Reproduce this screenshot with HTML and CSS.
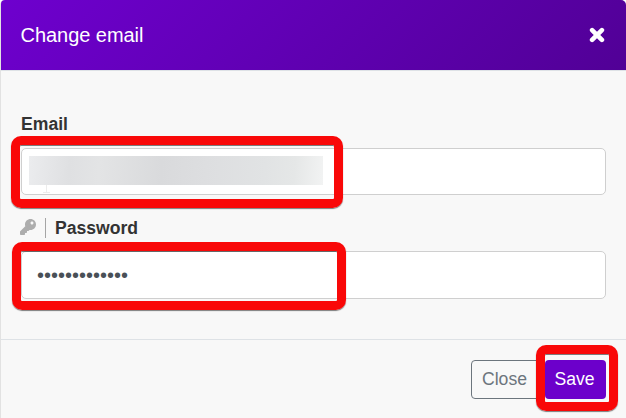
FILE: index.html
```html
<!DOCTYPE html>
<html lang="en">
<head>
<meta charset="utf-8">
<title>Change email</title>
<link rel="stylesheet" href="styles.css">
</head>
<body>
<div class="modal">
  <header class="modal-header">
    <h1 class="title">Change email</h1>
    <svg class="close-icon" viewBox="0 0 16 16"><path d="M3.1 3.1 12.9 12.9M12.9 3.1 3.1 12.9"/></svg>
  </header>
  <main class="modal-body">
    <div class="label">Email</div>
    <div class="field field-email">
      <div class="redacted"></div>
      <svg class="cursor" viewBox="0 0 7 8"><path d="M3.5 0V7.5M0 7.5H7"/></svg>
      <div class="highlight highlight-email"></div>
    </div>
    <div class="label label-password">
      <svg class="key" viewBox="0 0 512 512"><path d="M512 176c0 97-79 176-176 176-11 0-22-1-33-3l-24 27c-5 5-11 8-18 8h-37v40c0 13-11 24-24 24h-40v40c0 13-11 24-24 24H24c-13 0-24-11-24-24v-78c0-6 3-12 7-17l162-162c-6-17-9-36-9-55C160 79 239 0 336 0c97 0 176 79 176 176zM336 128c0 27 21 48 48 48s48-21 48-48-21-48-48-48-48 21-48 48z"/></svg>
      <span class="divider"></span>
      <span>Password</span>
    </div>
    <div class="field field-password">
      <span class="dots">•••••••••••••</span>
      <div class="highlight highlight-password"></div>
    </div>
  </main>
  <footer class="modal-footer">
    <div class="button button-close">Close</div>
    <div class="button button-save">Save
      <div class="highlight highlight-save"></div>
    </div>
  </footer>
</div>
</body>
</html>
```
FILE: styles.css
```css
* { box-sizing: border-box; }
body {
  margin: 0;
  height: 418px;
  overflow: hidden;
  background: #fff;
  font-family: "Liberation Sans", Arial, sans-serif;
  color: #333;
}
.modal {
  height: 418px;
  border-left: 1px solid #e2e2e2;
  border-radius: 5px 5px 0 0;
  background: #f8f8f8;
}
.modal-header {
  height: 70px;
  padding: 0 21px 0 19.5px;
  display: flex;
  align-items: center;
  justify-content: space-between;
  border-radius: 4px 5px 0 0;
  background: linear-gradient(135deg, #6e00ce, #510096);
}
.title {
  margin: 0;
  color: #fff;
  font-size: 20px;
  font-weight: 400;
  letter-spacing: -.04px;
  line-height: 30px;
}
.close-icon { width: 16px; height: 16px; margin-top: -1px; }
.close-icon path { stroke: #fff; stroke-width: 4.6; stroke-linecap: round; }
.modal-body {
  height: 270px;
  padding: 40px 20px 0;
  border-top: 1px solid #dee2e6;
  border-bottom: 1px solid #dee2e6;
}
.label {
  height: 37px;
  display: flex;
  padding-top: 1px;
  font-size: 17.6px;
  font-weight: 700;
  line-height: 24px;
}
.field {
  position: relative;
  display: flex;
  align-items: center;
  width: 585px;
  border: 1px solid #cfcfcf;
  border-radius: 5px;
  background: #fff;
}
.field-email { height: 47px; padding-left: 7px; }
.redacted {
  width: 294px;
  height: 29px;
  margin-top: -2px;
  background: linear-gradient(95deg, #ebecee, #dfe0e2 14%, #e3e4e5 24%, #d9dadc 45%, #dddee0 60%, #e1e3e4 80%, #e5e7e7 90%, #f2f3f3);
}
.cursor {
  position: absolute;
  left: 21px;
  top: 36px;
  width: 7px;
  height: 8px;
}
.cursor path { fill: none; stroke: #ececec; }
.label-password {
  height: 56px;
  padding-top: 21px;
}
.key {
  width: 16px;
  height: 16px;
  margin: 3px 1px 0 -1px;
  fill: #adadad;
}
.divider {
  width: 1px;
  height: 20px;
  margin: 2px 9px 0 8px;
  background: #a5a5a5;
}
.field-password { height: 48px; padding-left: 15px; }
.dots {
  margin-top: -1px;
  color: #495057;
  font-size: 20px;
  line-height: 24px;
}
.highlight {
  position: absolute;
  border: 9px solid #f90808;
  border-radius: 10px;
  box-shadow: 0 1px 1px rgba(0, 0, 0, .5), inset 0 1px 0 rgba(0, 0, 0, .5);
}
.highlight-email { left: -11px; top: -13px; width: 332px; height: 72px; }
.highlight-password { left: -10px; top: -10px; width: 334px; height: 68px; }
.highlight-save { left: -9px; top: -15px; width: 82px; height: 66px; }
.modal-footer {
  display: flex;
  justify-content: flex-end;
  padding: 20px 20px 0;
}
.button {
  height: 39px;
  font-size: 17.6px;
  line-height: 37px;
  border-radius: 4px;
}
.button-close {
  width: 70px;
  padding-left: 10px;
  border: 1px solid #6c757d;
  color: #6c757d;
}
.button-save {
  position: relative;
  width: 61px;
  padding-left: 9.5px;
  margin-left: 4px;
  line-height: 39px;
  color: #fff;
  background: #6c00cb;
}
```
